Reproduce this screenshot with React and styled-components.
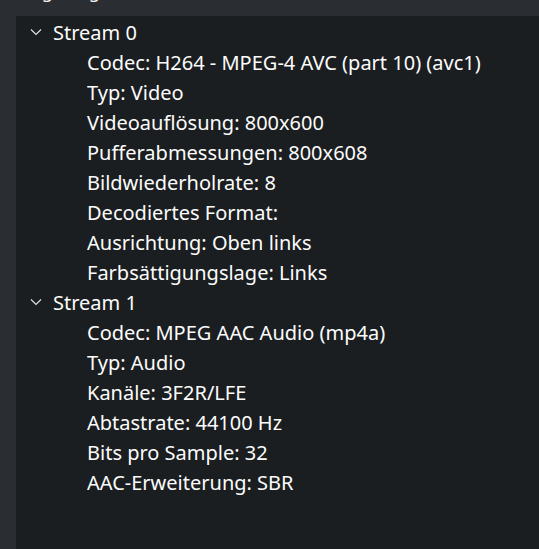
import React from "react";
import styled, { createGlobalStyle } from "styled-components";

const Global = createGlobalStyle`
  html, body { margin: 0; padding: 0; background: #2a2e32; }
  body { font-family: "Noto Sans", sans-serif; color: #fcfcfc; }
  #root { width: 539px; height: 549px; overflow: hidden; }
`;

const Page = styled.div`
  width: 539px;
  height: 549px;
  display: flex;
  flex-direction: column;
  background: #2a2e32;
  overflow: hidden;
`;

const Heading = styled.div`
  height: 16px;
  flex: none;
  padding-left: 16px;
  font-size: 18px;
  overflow: hidden;
  & > span {
    display: block;
    margin-top: -18px;
    line-height: 18px;
    white-space: nowrap;
  }
`;

const Panel = styled.div`
  flex: 1;
  margin-left: 16px;
  background: #1b1e20;
  padding-top: 1px;
  display: flex;
  flex-direction: column;
`;

const Row = styled.div`
  height: 30px;
  display: flex;
  align-items: center;
  padding-left: ${(p) => (p.$child ? 71 : 14)}px;
  font-size: 20px;
  white-space: nowrap;
  color: #fcfcfc;
`;

const Toggle = styled.span`
  width: 23px;
  display: flex;
  align-items: center;
  flex: none;
`;

const Chevron = () => (
  <svg width="12" height="8" viewBox="0 0 12 8">
    <path d="M1 1.5 L6 6.5 L11 1.5" fill="none" stroke="#dfe1e3" strokeWidth="1.2" />
  </svg>
);

const streams = [
  {
    name: "Stream 0",
    items: [
      "Codec: H264 - MPEG-4 AVC (part 10) (avc1)",
      "Typ: Video",
      "Videoauflösung: 800x600",
      "Pufferabmessungen: 800x608",
      "Bildwiederholrate: 8",
      "Decodiertes Format:",
      "Ausrichtung: Oben links",
      "Farbsättigungslage: Links",
    ],
  },
  {
    name: "Stream 1",
    items: [
      "Codec: MPEG AAC Audio (mp4a)",
      "Typ: Audio",
      "Kanäle: 3F2R/LFE",
      "Abtastrate: 44100 Hz",
      "Bits pro Sample: 32",
      "AAC-Erweiterung: SBR",
    ],
  },
];

export default function App() {
  return (
    <Page>
      <Global />
      <Heading>
        <span>Eingabe gesamt</span>
      </Heading>
      <Panel>
        {streams.map((s) => (
          <React.Fragment key={s.name}>
            <Row>
              <Toggle>
                <Chevron />
              </Toggle>
              {s.name}
            </Row>
            {s.items.map((it) => (
              <Row key={it} $child>
                {it}
              </Row>
            ))}
          </React.Fragment>
        ))}
      </Panel>
    </Page>
  );
}
